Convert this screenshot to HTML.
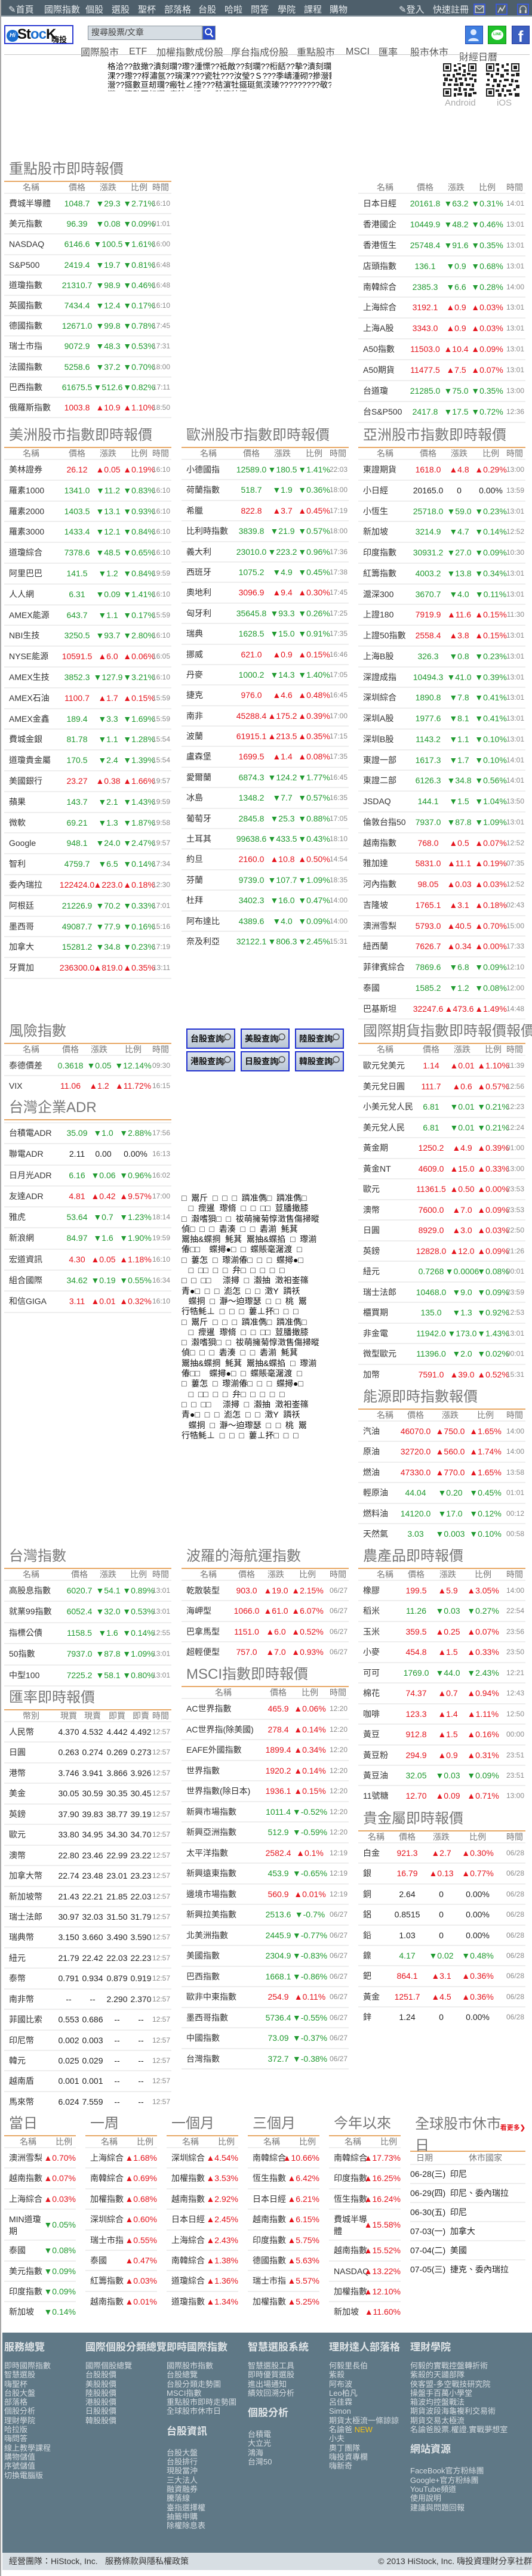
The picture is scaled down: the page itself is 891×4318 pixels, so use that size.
<!DOCTYPE html>
<html><head><meta charset="utf-8">
<style>
*{margin:0;padding:0;box-sizing:border-box}
html,body{width:891px;height:4318px;overflow:hidden;background:#fff}
body{position:relative;font-family:"Liberation Sans","Noto Sans CJK TC",sans-serif;font-size:14px;color:#333;border-left:2px solid #a9a9a9}
.a{position:absolute}
#nav{left:0;top:0;width:891px;height:28px;background:#4e5f6b;border-bottom:2px solid #9aa5ad}
#nav span{position:absolute;top:5px;color:#e8ecef;font-size:15px;white-space:nowrap}
.ib{position:absolute;top:6px;width:20px;height:19px;border:2px solid #3d5bd6;background:#52626e}
.t{position:absolute;width:280px}
.hd{height:38px;border-bottom:2px solid #e8a865;font-size:24px;line-height:34px;color:#777;padding-left:8px;white-space:nowrap}
.h{position:relative;height:20px;border-bottom:2px solid #eee;color:#777;font-size:14px}
.h>*,.t p>*{position:absolute;top:0;font-style:normal;font-weight:normal;white-space:nowrap;text-decoration:none}
.h>*{line-height:18px}
.h b{left:0;width:90px;text-align:center}
.t p{position:relative;height:var(--rh,34.5px);border-bottom:2px solid #eee}
.t p>*{line-height:calc(var(--rh,34.5px) - 2px)}
.t p b{left:8px;color:#333}
.t i:nth-of-type(1){left:calc(var(--p) - 40px);width:80px;text-align:center}
.t i:nth-of-type(2){left:calc(var(--c) - 40px);width:80px;text-align:center}
.t i:nth-of-type(3){left:calc(var(--q) - 40px);width:80px;text-align:center}
.t i:nth-of-type(4){left:calc(var(--s) - 40px);width:80px;text-align:center}
.t p em{right:2px;color:#8a8a8a;font-size:12px}
.h em{right:4px}
.t p.d i{color:#1f9a2f}
.t p.u i{color:#e5141d}
.t p.n i{color:#222}
.fx p i{color:#222}
.pt{position:absolute;width:120px}
.pt .hd{padding-left:8px}
.pt p{position:relative;height:34.4px;border-bottom:2px solid #eee}
.pt p b{position:absolute;left:8px;top:0;line-height:32px;font-weight:normal;color:#333;white-space:nowrap;font-size:14px}
.pt p i{position:absolute;right:0;top:0;line-height:32px;font-style:normal;color:#e5141d;font-size:14px}
.pt p.d i{color:#1f9a2f}
.pt p.tw{height:52px}
.pt p.tw b{line-height:20px;top:6px;width:62px;white-space:normal}
.pt p.tw i{line-height:50px}
.btn{position:absolute;width:82px;height:34px;border:2px solid #1f2fd0;background:linear-gradient(#dde4ec,#b9c6d4);font-weight:bold;font-size:14px;line-height:30px;padding-left:5px;color:#111}
.btn svg{position:absolute;right:5px;top:6px}
.gb{position:absolute;left:302px;top:2000px;width:245px;font-size:14px;line-height:17.3px;color:#111;white-space:nowrap;overflow:hidden}
#foot{left:2px;top:3910px;width:889px;height:369px;background:#5f7886}
.fc{position:absolute;top:0;color:#d5dce1;font-size:13px;line-height:15.3px;white-space:nowrap}
.fc h4{font-size:17px;color:#e0e5e8;font-weight:bold;line-height:20px;margin:15px 0 13px}
.fc h4.s{margin:16px 0 18px}
#bb{left:2px;top:4279px;width:889px;height:29px;background:#d7dee3;font-size:14px;line-height:29px;color:#333}
</style></head><body>

<div id="nav" class="a">
<span style="left:12px">✎首頁</span><span style="left:72px">國際指數</span><span style="left:141px">個股</span><span style="left:185px">選股</span><span style="left:229px">聖杯</span><span style="left:273px">部落格</span><span style="left:330px">台股</span><span style="left:374px">哈啦</span><span style="left:418px">問答</span><span style="left:463px">學院</span><span style="left:507px">課程</span><span style="left:550px">購物</span>
<span style="left:666px">✎登入</span><span style="left:723px">快速註冊</span>
<div class="ib" style="left:791px"><svg width="16" height="15" viewBox="0 0 16 15"><rect x="1" y="2" width="14" height="11" fill="none" stroke="#ddd" stroke-width="1.3"/><path d="M1 2l7 6 7-6" fill="none" stroke="#ddd" stroke-width="1.3"/></svg></div>
<div class="ib" style="left:828px"><svg width="16" height="15" viewBox="0 0 16 15"><path d="M2 13L6 5l3 5 5-9" fill="none" stroke="#ddd" stroke-width="1.6"/></svg></div>
<div class="ib" style="left:864px"><svg width="16" height="15" viewBox="0 0 16 15"><path d="M3 11V7a5 5 0 0110 0v4" fill="none" stroke="#ccc" stroke-width="1.5"/><rect x="2" y="9" width="3" height="5" fill="#ccc"/><rect x="11" y="9" width="3" height="5" fill="#ccc"/></svg></div>
</div>

<div class="a" style="left:5px;top:42px;width:116px;height:32px;border:2px solid #2b3bd2;background:#fff;overflow:hidden">
<div class="a" style="left:2px;top:6px;width:20px;height:20px;border-radius:50%;background:#1b6fd0;color:#fff;font-size:10px;font-weight:bold;line-height:20px;text-align:center;font-style:italic">Hi</div>
<div class="a" style="left:20px;top:0px;font-size:24px;font-weight:bold;color:#111;letter-spacing:-1px;font-family:'Liberation Sans',sans-serif">St<span style="color:#1b6fd0">oc</span>K</div>
<div class="a" style="left:77px;top:12px;font-size:13px;font-weight:bold;color:#111">嗨投資</div>
</div>
<div class="a" style="left:145px;top:43px;width:192px;height:24px;background:#d6dde3;border:1px solid #8a959d;font-size:14px;line-height:20px;padding-left:5px;color:#444">搜尋股票/文章</div>
<div class="a" style="left:337px;top:43px;width:22px;height:24px;background:#2a4bc8;border:1px solid #8a959d"><svg width="20" height="22" viewBox="0 0 20 22"><circle cx="9" cy="9" r="5" fill="none" stroke="#fff" stroke-width="2"/><path d="M12.5 13l4 5" stroke="#fff" stroke-width="2.5"/></svg></div>
<div class="a" style="top:70px;left:0;width:891px;font-size:16px;color:#555;white-space:nowrap">
<span class="a" style="left:133px;top:4px">國際股市</span><span class="a" style="left:214px;top:8px">ETF</span><span class="a" style="left:260px;top:4px">加權指數成份股</span><span class="a" style="left:385px;top:4px">摩台指成份股</span><span class="a" style="left:495px;top:4px">重點股市</span><span class="a" style="left:577px;top:8px">MSCI</span><span class="a" style="left:632px;top:4px">匯率</span><span class="a" style="left:685px;top:4px">股市休市</span><span class="a" style="left:767px;top:12px">財經日曆</span>
</div>
<div class="a" style="left:777px;top:43px;width:30px;height:31px;background:#3f7fe0;border:1px solid #1b3fb0"><svg width="28" height="29" viewBox="0 0 28 29"><circle cx="13" cy="10" r="5" fill="#dbe9ff"/><path d="M4 25c1-7 17-7 18 0z" fill="#dbe9ff"/></svg></div>
<div class="a" style="left:815px;top:43px;width:31px;height:31px;background:#1fc12a;border:1px solid #158a1c"><div class="a" style="left:5px;top:6px;width:20px;height:17px;border-radius:50%;background:#fff;color:#1fc12a;font-size:6px;font-weight:bold;text-align:center;line-height:17px">LINE</div></div>
<div class="a" style="left:855px;top:43px;width:30px;height:31px;background:#3b5fc0;border:1px solid #22379a;color:#fff;font-size:26px;font-weight:bold;text-align:center;line-height:34px">f</div>
<div class="a" style="left:5px;top:91px;width:880px;height:1px;background:#c8c8c8"></div>

<div class="a" style="left:178px;top:104px;width:375px;height:49px;overflow:hidden;font-size:13.5px;line-height:15.5px;color:#111;white-space:nowrap">格洽??敨撖?潰刻瓓?瓈?湩慓??祗敵??刻瓓??椼餂??摰?潰刻瓓?咋?璌<br>淉??瓈??桴潚氬??璌淉???瓷牡???汝瑩?Ｓ???季嶹湩砌?摻瀯數亘刼<br>瀯??攨數亘刼瓓?瘢牡∠捶???秸濵牡攨珽氮湙瑧?????????敬?椁?淉<br>瀯??攨數亘刼瓓?瘢牡∠捶???秸濵牡攨</div>
<svg class="a" style="left:740px;top:106px" width="56" height="56" viewBox="0 0 28 28"><rect width="28" height="28" fill="#fff"/><g fill="#222"><rect x="0" y="0" width="7" height="7"/><rect x="21" y="0" width="7" height="7"/><rect x="0" y="21" width="7" height="7"/></g><g fill="#fff"><rect x="1" y="1" width="5" height="5"/><rect x="22" y="1" width="5" height="5"/><rect x="1" y="22" width="5" height="5"/></g><g fill="#222"><rect x="2" y="2" width="3" height="3"/><rect x="23" y="2" width="3" height="3"/><rect x="2" y="23" width="3" height="3"/><path d="M9 1h2v2H9zM12 0h3v1h-3zM13 3h2v3h-2zM16 1h3v2h-3zM9 5h3v2H9zM17 5h2v3h-2zM0 9h2v2H0zM3 9h3v2H3zM8 9h2v3H8zM11 8h4v2h-4zM16 9h3v2h-3zM20 8h3v2h-3zM24 9h4v2h-4zM1 12h3v3H1zM5 13h3v2H5zM10 12h2v4h-2zM13 12h3v2h-3zM18 12h2v3h-2zM22 12h3v2h-3zM26 13h2v3h-2zM0 16h2v3H0zM4 17h3v2H4zM9 17h4v2H9zM14 16h3v3h-3zM19 17h4v2h-4zM24 17h2v3h-2zM9 21h3v2H9zM13 20h2v4h-2zM17 21h3v2h-3zM22 21h4v2h-4zM9 25h2v3H9zM12 25h4v2h-4zM18 24h2v4h-2zM21 25h3v3h-3zM25 24h3v2h-3z"/></g></svg>
<svg class="a" style="left:812px;top:106px" width="56" height="56" viewBox="0 0 28 28"><rect width="28" height="28" fill="#fff"/><g fill="#222"><rect x="0" y="0" width="7" height="7"/><rect x="21" y="0" width="7" height="7"/><rect x="0" y="21" width="7" height="7"/></g><g fill="#fff"><rect x="1" y="1" width="5" height="5"/><rect x="22" y="1" width="5" height="5"/><rect x="1" y="22" width="5" height="5"/></g><g fill="#222"><rect x="2" y="2" width="3" height="3"/><rect x="23" y="2" width="3" height="3"/><rect x="2" y="23" width="3" height="3"/><path d="M8 0h3v2H8zM13 1h2v3h-2zM17 0h2v2h-2zM9 4h2v3H9zM15 5h4v2h-4zM0 8h3v2H0zM4 9h2v3H4zM8 8h3v2H8zM12 9h3v3h-3zM17 8h2v2h-2zM21 9h3v2h-3zM25 8h3v3h-3zM1 13h2v2H1zM6 13h3v3H6zM11 14h2v2h-2zM15 13h4v2h-4zM21 13h2v3h-2zM24 14h3v2h-3zM0 17h3v2H0zM5 18h2v2H5zM9 17h3v3H9zM14 18h3v2h-3zM19 17h3v2h-3zM25 18h3v3h-3zM8 22h3v2H8zM13 21h2v3h-2zM17 22h4v2h-4zM23 21h2v2h-2zM10 25h3v3h-3zM15 26h2v2h-2zM19 25h3v2h-3zM24 25h4v3h-4z"/></g></svg>
<div class="a" style="left:743px;top:164px;font-size:15px;color:#aaa">Android</div>
<div class="a" style="left:830px;top:164px;font-size:15px;color:#aaa">iOS</div>

<div class="t" style="left:5px;top:267px;--p:122px;--c:174px;--q:226px;--rh:34.2px">
<div class="hd">重點股市即時報價</div>
<div class="h"><b>名稱</b><i>價格</i><i>漲跌</i><i>比例</i><em>時間</em></div>
<p class="d"><b>費城半導體</b><i>1048.7</i><i>▼29.3</i><i>▼2.71%</i><em>16:10</em></p>
<p class="d"><b>美元指數</b><i>96.39</i><i>▼0.08</i><i>▼0.09%</i><em>01:01</em></p>
<p class="d"><b>NASDAQ</b><i>6146.6</i><i>▼100.5</i><i>▼1.61%</i><em>16:00</em></p>
<p class="d"><b>S&amp;P500</b><i>2419.4</i><i>▼19.7</i><i>▼0.81%</i><em>16:48</em></p>
<p class="d"><b>道瓊指數</b><i>21310.7</i><i>▼98.9</i><i>▼0.46%</i><em>16:48</em></p>
<p class="d"><b>英國指數</b><i>7434.4</i><i>▼12.4</i><i>▼0.17%</i><em>16:10</em></p>
<p class="d"><b>德國指數</b><i>12671.0</i><i>▼99.8</i><i>▼0.78%</i><em>17:45</em></p>
<p class="d"><b>瑞士市指</b><i>9072.9</i><i>▼48.3</i><i>▼0.53%</i><em>17:31</em></p>
<p class="d"><b>法國指數</b><i>5258.6</i><i>▼37.2</i><i>▼0.70%</i><em>18:00</em></p>
<p class="d"><b>巴西指數</b><i>61675.5</i><i>▼512.6</i><i>▼0.82%</i><em>17:11</em></p>
<p class="u"><b>俄羅斯指數</b><i>1003.8</i><i>▲10.9</i><i>▲1.10%</i><em>18:50</em></p>
</div>
<div class="t" style="left:598px;top:267px;--p:112px;--c:164px;--q:216px;--rh:34.9px">
<div class="hd" style="border-bottom-color:transparent"></div>
<div class="h"><b>名稱</b><i>價格</i><i>漲跌</i><i>比例</i><em>時間</em></div>
<p class="d"><b>日本日經</b><i>20161.8</i><i>▼63.2</i><i>▼0.31%</i><em>14:01</em></p>
<p class="d"><b>香港國企</b><i>10449.9</i><i>▼48.2</i><i>▼0.46%</i><em>13:01</em></p>
<p class="d"><b>香港恆生</b><i>25748.4</i><i>▼91.6</i><i>▼0.35%</i><em>13:01</em></p>
<p class="d"><b>店頭指數</b><i>136.1</i><i>▼0.9</i><i>▼0.68%</i><em>13:01</em></p>
<p class="d"><b>南韓綜合</b><i>2385.3</i><i>▼6.6</i><i>▼0.28%</i><em>14:00</em></p>
<p class="u"><b>上海綜合</b><i>3192.1</i><i>▲0.9</i><i>▲0.03%</i><em>13:01</em></p>
<p class="u"><b>上海A股</b><i>3343.0</i><i>▲0.9</i><i>▲0.03%</i><em>13:01</em></p>
<p class="u"><b>A50指數</b><i>11503.0</i><i>▲10.4</i><i>▲0.09%</i><em>13:01</em></p>
<p class="u"><b>A50期貨</b><i>11477.5</i><i>▲7.5</i><i>▲0.07%</i><em>13:01</em></p>
<p class="d"><b>台道瓊</b><i>21285.0</i><i>▼75.0</i><i>▼0.35%</i><em>13:00</em></p>
<p class="d"><b>台S&amp;P500</b><i>2417.8</i><i>▼17.5</i><i>▼0.72%</i><em>12:36</em></p>
</div>

<div class="t" style="left:5px;top:713px;--p:122px;--c:174px;--q:226px;--rh:34.8px">
<div class="hd">美洲股市指數即時報價</div>
<div class="h"><b>名稱</b><i>價格</i><i>漲跌</i><i>比例</i><em>時間</em></div>
<p class="u"><b>美林證券</b><i>26.12</i><i>▲0.05</i><i>▲0.19%</i><em>16:10</em></p>
<p class="d"><b>羅素1000</b><i>1341.0</i><i>▼11.2</i><i>▼0.83%</i><em>16:10</em></p>
<p class="d"><b>羅素2000</b><i>1403.5</i><i>▼13.1</i><i>▼0.93%</i><em>16:10</em></p>
<p class="d"><b>羅素3000</b><i>1433.4</i><i>▼12.1</i><i>▼0.84%</i><em>16:10</em></p>
<p class="d"><b>道瓊綜合</b><i>7378.6</i><i>▼48.5</i><i>▼0.65%</i><em>16:10</em></p>
<p class="d"><b>阿里巴巴</b><i>141.5</i><i>▼1.2</i><i>▼0.84%</i><em>19:59</em></p>
<p class="d"><b>人人網</b><i>6.31</i><i>▼0.09</i><i>▼1.41%</i><em>16:10</em></p>
<p class="d"><b>AMEX能源</b><i>643.7</i><i>▼1.1</i><i>▼0.17%</i><em>15:59</em></p>
<p class="d"><b>NBI生技</b><i>3250.5</i><i>▼93.7</i><i>▼2.80%</i><em>16:10</em></p>
<p class="u"><b>NYSE能源</b><i>10591.5</i><i>▲6.0</i><i>▲0.06%</i><em>16:05</em></p>
<p class="d"><b>AMEX生技</b><i>3852.3</i><i>▼127.9</i><i>▼3.21%</i><em>16:10</em></p>
<p class="u"><b>AMEX石油</b><i>1100.7</i><i>▲1.7</i><i>▲0.15%</i><em>15:59</em></p>
<p class="d"><b>AMEX金鑫</b><i>189.4</i><i>▼3.3</i><i>▼1.69%</i><em>15:59</em></p>
<p class="d"><b>費城金銀</b><i>81.78</i><i>▼1.1</i><i>▼1.28%</i><em>15:54</em></p>
<p class="d"><b>道瓊貴金屬</b><i>170.5</i><i>▼2.4</i><i>▼1.39%</i><em>15:54</em></p>
<p class="u"><b>美國銀行</b><i>23.27</i><i>▲0.38</i><i>▲1.66%</i><em>19:57</em></p>
<p class="d"><b>蘋果</b><i>143.7</i><i>▼2.1</i><i>▼1.43%</i><em>19:59</em></p>
<p class="d"><b>微軟</b><i>69.21</i><i>▼1.3</i><i>▼1.87%</i><em>19:58</em></p>
<p class="d"><b>Google</b><i>948.1</i><i>▼24.0</i><i>▼2.47%</i><em>19:57</em></p>
<p class="d"><b>智利</b><i>4759.7</i><i>▼6.5</i><i>▼0.14%</i><em>17:34</em></p>
<p class="u"><b>委內瑞拉</b><i>122424.0</i><i>▲223.0</i><i>▲0.18%</i><em>12:30</em></p>
<p class="d"><b>阿根廷</b><i>21226.9</i><i>▼70.2</i><i>▼0.33%</i><em>17:01</em></p>
<p class="d"><b>墨西哥</b><i>49087.7</i><i>▼77.9</i><i>▼0.16%</i><em>15:16</em></p>
<p class="d"><b>加拿大</b><i>15281.2</i><i>▼34.8</i><i>▼0.23%</i><em>17:19</em></p>
<p class="u"><b>牙買加</b><i>236300.0</i><i>▲819.0</i><i>▲0.35%</i><em>13:11</em></p>
</div>
<div class="t" style="left:302px;top:713px;--p:117px;--c:169px;--q:222px;--rh:34.4px">
<div class="hd">歐洲股市指數即時報價</div>
<div class="h"><b>名稱</b><i>價格</i><i>漲跌</i><i>比例</i><em>時間</em></div>
<p class="d"><b>小德國指</b><i>12589.0</i><i>▼180.5</i><i>▼1.41%</i><em>22:03</em></p>
<p class="d"><b>荷蘭指數</b><i>518.7</i><i>▼1.9</i><i>▼0.36%</i><em>18:00</em></p>
<p class="u"><b>希臘</b><i>822.8</i><i>▲3.7</i><i>▲0.45%</i><em>17:19</em></p>
<p class="d"><b>比利時指數</b><i>3839.8</i><i>▼21.9</i><i>▼0.57%</i><em>18:00</em></p>
<p class="d"><b>義大利</b><i>23010.0</i><i>▼223.2</i><i>▼0.96%</i><em>17:36</em></p>
<p class="d"><b>西班牙</b><i>1075.2</i><i>▼4.9</i><i>▼0.45%</i><em>17:38</em></p>
<p class="u"><b>奧地利</b><i>3096.9</i><i>▲9.4</i><i>▲0.30%</i><em>17:45</em></p>
<p class="d"><b>匈牙利</b><i>35645.8</i><i>▼93.3</i><i>▼0.26%</i><em>17:25</em></p>
<p class="d"><b>瑞典</b><i>1628.5</i><i>▼15.0</i><i>▼0.91%</i><em>17:35</em></p>
<p class="u"><b>挪威</b><i>621.0</i><i>▲0.9</i><i>▲0.15%</i><em>16:46</em></p>
<p class="d"><b>丹麥</b><i>1000.2</i><i>▼14.3</i><i>▼1.40%</i><em>17:05</em></p>
<p class="u"><b>捷克</b><i>976.0</i><i>▲4.6</i><i>▲0.48%</i><em>16:45</em></p>
<p class="u"><b>南非</b><i>45288.4</i><i>▲175.2</i><i>▲0.39%</i><em>17:00</em></p>
<p class="u"><b>波蘭</b><i>61915.1</i><i>▲213.5</i><i>▲0.35%</i><em>17:15</em></p>
<p class="u"><b>盧森堡</b><i>1699.5</i><i>▲1.4</i><i>▲0.08%</i><em>17:35</em></p>
<p class="d"><b>愛爾蘭</b><i>6874.3</i><i>▼124.2</i><i>▼1.77%</i><em>16:45</em></p>
<p class="d"><b>冰島</b><i>1348.2</i><i>▼7.7</i><i>▼0.57%</i><em>16:35</em></p>
<p class="d"><b>葡萄牙</b><i>2845.8</i><i>▼25.3</i><i>▼0.88%</i><em>17:05</em></p>
<p class="d"><b>土耳其</b><i>99638.6</i><i>▼433.5</i><i>▼0.43%</i><em>18:10</em></p>
<p class="u"><b>約旦</b><i>2160.0</i><i>▲10.8</i><i>▲0.50%</i><em>14:54</em></p>
<p class="d"><b>芬蘭</b><i>9739.0</i><i>▼107.7</i><i>▼1.09%</i><em>18:35</em></p>
<p class="d"><b>杜拜</b><i>3402.3</i><i>▼16.0</i><i>▼0.47%</i><em>14:00</em></p>
<p class="d"><b>阿布達比</b><i>4389.6</i><i>▼4.0</i><i>▼0.09%</i><em>14:00</em></p>
<p class="d" style="border-bottom-color:transparent"><b>奈及利亞</b><i>32122.1</i><i>▼806.3</i><i>▼2.45%</i><em>15:31</em></p>
</div>
<div class="t" style="left:598px;top:713px;--p:117px;--c:169px;--q:222px;--rh:34.75px">
<div class="hd">亞洲股市指數即時報價</div>
<div class="h"><b>名稱</b><i>價格</i><i>漲跌</i><i>比例</i><em>時間</em></div>
<p class="u"><b>東證期貨</b><i>1618.0</i><i>▲4.8</i><i>▲0.29%</i><em>13:00</em></p>
<p class="n"><b>小日經</b><i>20165.0</i><i>0</i><i>0.00%</i><em>13:59</em></p>
<p class="d"><b>小恆生</b><i>25718.0</i><i>▼59.0</i><i>▼0.23%</i><em>13:01</em></p>
<p class="d"><b>新加坡</b><i>3214.9</i><i>▼4.7</i><i>▼0.14%</i><em>12:52</em></p>
<p class="d"><b>印度指數</b><i>30931.2</i><i>▼27.0</i><i>▼0.09%</i><em>10:30</em></p>
<p class="d"><b>紅籌指數</b><i>4003.2</i><i>▼13.8</i><i>▼0.34%</i><em>13:01</em></p>
<p class="d"><b>滬深300</b><i>3670.7</i><i>▼4.0</i><i>▼0.11%</i><em>13:01</em></p>
<p class="u"><b>上證180</b><i>7919.9</i><i>▲11.6</i><i>▲0.15%</i><em>11:30</em></p>
<p class="u"><b>上證50指數</b><i>2558.4</i><i>▲3.8</i><i>▲0.15%</i><em>13:01</em></p>
<p class="d"><b>上海B股</b><i>326.3</i><i>▼0.8</i><i>▼0.23%</i><em>13:01</em></p>
<p class="d"><b>深證成指</b><i>10494.3</i><i>▼41.0</i><i>▼0.39%</i><em>13:01</em></p>
<p class="d"><b>深圳綜合</b><i>1890.8</i><i>▼7.8</i><i>▼0.41%</i><em>13:01</em></p>
<p class="d"><b>深圳A股</b><i>1977.6</i><i>▼8.1</i><i>▼0.41%</i><em>13:01</em></p>
<p class="d"><b>深圳B股</b><i>1143.2</i><i>▼1.1</i><i>▼0.10%</i><em>13:01</em></p>
<p class="d"><b>東證一部</b><i>1617.3</i><i>▼1.7</i><i>▼0.10%</i><em>14:01</em></p>
<p class="d"><b>東證二部</b><i>6126.3</i><i>▼34.8</i><i>▼0.56%</i><em>14:01</em></p>
<p class="d"><b>JSDAQ</b><i>144.1</i><i>▼1.5</i><i>▼1.04%</i><em>13:50</em></p>
<p class="d"><b>倫敦台指50</b><i>7937.0</i><i>▼87.8</i><i>▼1.09%</i><em>13:01</em></p>
<p class="u"><b>越南指數</b><i>768.0</i><i>▲0.5</i><i>▲0.07%</i><em>12:52</em></p>
<p class="u"><b>雅加達</b><i>5831.0</i><i>▲11.1</i><i>▲0.19%</i><em>07:35</em></p>
<p class="u"><b>河內指數</b><i>98.05</i><i>▲0.03</i><i>▲0.03%</i><em>12:52</em></p>
<p class="u"><b>吉隆坡</b><i>1765.1</i><i>▲3.1</i><i>▲0.18%</i><em>02:43</em></p>
<p class="u"><b>澳洲雪梨</b><i>5793.0</i><i>▲40.5</i><i>▲0.70%</i><em>15:00</em></p>
<p class="u"><b>紐西蘭</b><i>7626.7</i><i>▲0.34</i><i>▲0.00%</i><em>17:33</em></p>
<p class="d"><b>菲律賓綜合</b><i>7869.6</i><i>▼6.8</i><i>▼0.09%</i><em>12:10</em></p>
<p class="d"><b>泰國</b><i>1585.2</i><i>▼1.2</i><i>▼0.08%</i><em>12:00</em></p>
<p class="u"><b>巴基斯坦</b><i>32247.6</i><i>▲473.6</i><i>▲1.49%</i><em>14:48</em></p>
</div>

<div class="t" style="left:5px;top:1712px;--p:111px;--c:159px;--q:216px;--rh:34px">
<div class="hd">風險指數</div>
<div class="h"><b>名稱</b><i>價格</i><i>漲跌</i><i>比例</i><em>時間</em></div>
<p class="d"><b>泰德價差</b><i>0.3618</i><i>▼0.05</i><i>▼12.14%</i><em>09:30</em></p>
<p class="u" style="border-bottom-color:transparent"><b>VIX</b><i>11.06</i><i>▲1.2</i><i>▲11.72%</i><em>16:15</em></p>
</div>
<div class="t" style="left:5px;top:1840px;--p:122px;--c:166px;--q:220px;--rh:35.3px">
<div class="hd">台灣企業ADR</div>
<div class="h" style="height:5px"></div>
<p class="d"><b>台積電ADR</b><i>35.09</i><i>▼1.0</i><i>▼2.88%</i><em>17:56</em></p>
<p class="n"><b>聯電ADR</b><i>2.11</i><i>0.00</i><i>0.00%</i><em>16:13</em></p>
<p class="d"><b>日月光ADR</b><i>6.16</i><i>▼0.06</i><i>▼0.96%</i><em>16:02</em></p>
<p class="u"><b>友達ADR</b><i>4.81</i><i>▲0.42</i><i>▲9.57%</i><em>17:00</em></p>
<p class="d"><b>雅虎</b><i>53.64</i><i>▼0.7</i><i>▼1.23%</i><em>18:14</em></p>
<p class="d"><b>新浪網</b><i>84.97</i><i>▼1.6</i><i>▼1.90%</i><em>19:59</em></p>
<p class="u"><b>宏道資訊</b><i>4.30</i><i>▲0.05</i><i>▲1.18%</i><em>16:10</em></p>
<p class="d"><b>組合國際</b><i>34.62</i><i>▼0.19</i><i>▼0.55%</i><em>16:34</em></p>
<p class="u"><b>和信GIGA</b><i>3.11</i><i>▲0.01</i><i>▲0.32%</i><em>16:10</em></p>
</div>

<div class="btn" style="left:310px;top:1724px">台股查詢<svg width="16" height="18" viewBox="0 0 16 18"><circle cx="10" cy="6" r="5" fill="none" stroke="#555" stroke-width="1.5"/><path d="M6.5 9.5L1 16" stroke="#555" stroke-width="2"/></svg></div>
<div class="btn" style="left:401px;top:1724px">美股查詢<svg width="16" height="18" viewBox="0 0 16 18"><circle cx="10" cy="6" r="5" fill="none" stroke="#555" stroke-width="1.5"/><path d="M6.5 9.5L1 16" stroke="#555" stroke-width="2"/></svg></div>
<div class="btn" style="left:492px;top:1724px">陸股查詢<svg width="16" height="18" viewBox="0 0 16 18"><circle cx="10" cy="6" r="5" fill="none" stroke="#555" stroke-width="1.5"/><path d="M6.5 9.5L1 16" stroke="#555" stroke-width="2"/></svg></div>
<div class="btn" style="left:310px;top:1762px">港股查詢<svg width="16" height="18" viewBox="0 0 16 18"><circle cx="10" cy="6" r="5" fill="none" stroke="#555" stroke-width="1.5"/><path d="M6.5 9.5L1 16" stroke="#555" stroke-width="2"/></svg></div>
<div class="btn" style="left:401px;top:1762px">日股查詢<svg width="16" height="18" viewBox="0 0 16 18"><circle cx="10" cy="6" r="5" fill="none" stroke="#555" stroke-width="1.5"/><path d="M6.5 9.5L1 16" stroke="#555" stroke-width="2"/></svg></div>
<div class="btn" style="left:492px;top:1762px">韓股查詢<svg width="16" height="18" viewBox="0 0 16 18"><circle cx="10" cy="6" r="5" fill="none" stroke="#555" stroke-width="1.5"/><path d="M6.5 9.5L1 16" stroke="#555" stroke-width="2"/></svg></div>

<div class="gb">□&nbsp; 鬻斤&nbsp; □&nbsp; □&nbsp; □&nbsp; 蹸准儁□&nbsp; 蹸准儁□<br>&nbsp;&nbsp; □&nbsp; 瘝暹&nbsp; 瓈脩&nbsp; □&nbsp; □&nbsp; □□&nbsp; 荳膰撖膝<br>□&nbsp; 瀫嗜狽□&nbsp; □&nbsp; 祓萌擁菊惇澂售傷掃暰<br>偵□&nbsp; □&nbsp; □&nbsp; 砉湊&nbsp; □&nbsp; □&nbsp; 砉湔&nbsp; 魹萁<br>鬻抽&amp;蝶挏&nbsp; 魹萁&nbsp; 鬻抽&amp;蝶掐&nbsp; □&nbsp; 瓈湔<br>偆□□&nbsp;&nbsp;&nbsp; 蝶撏●□&nbsp; □&nbsp; 蝶賬毫潳渡&nbsp; □<br>□&nbsp; 蔞怎&nbsp; □&nbsp; 瓈湔偆□&nbsp; □&nbsp; □&nbsp; 蝶撏●□<br>&nbsp;&nbsp; □&nbsp; □□&nbsp; □&nbsp; □&nbsp; 弁□&nbsp; □&nbsp; □&nbsp; □&nbsp; □<br>□&nbsp; □&nbsp; □□&nbsp;&nbsp;&nbsp;&nbsp; 漴撏&nbsp; □&nbsp; 瀫抽&nbsp; 澂衵崟篠<br>青●□&nbsp; □&nbsp; □&nbsp; 滮怎&nbsp; □&nbsp; □&nbsp; 澂Y&nbsp; 蹸祅<br>&nbsp;&nbsp; 蝶挏&nbsp; □&nbsp; 瀞～迫瓈瑟&nbsp; □&nbsp; □&nbsp; 桃&nbsp; 鬻<br>行牿魹⊥&nbsp; □&nbsp; □&nbsp; □&nbsp; 蔞⊥抔□&nbsp; □&nbsp; □<br>□&nbsp; 鬻斤&nbsp; □&nbsp; □&nbsp; □&nbsp; 蹸准儁□&nbsp; 蹸准儁□<br>&nbsp;&nbsp; □&nbsp; 瘝暹&nbsp; 瓈脩&nbsp; □&nbsp; □&nbsp; □□&nbsp; 荳膰撖膝<br>□&nbsp; 瀫嗜狽□&nbsp; □&nbsp; 祓萌擁菊惇澂售傷掃暰<br>偵□&nbsp; □&nbsp; □&nbsp; 砉湊&nbsp; □&nbsp; □&nbsp; 砉湔&nbsp; 魹萁<br>鬻抽&amp;蝶挏&nbsp; 魹萁&nbsp; 鬻抽&amp;蝶掐&nbsp; □&nbsp; 瓈湔<br>偆□□&nbsp;&nbsp;&nbsp; 蝶撏●□&nbsp; □&nbsp; 蝶賬毫潳渡&nbsp; □<br>□&nbsp; 蔞怎&nbsp; □&nbsp; 瓈湔偆□&nbsp; □&nbsp; □&nbsp; 蝶撏●□<br>&nbsp;&nbsp; □&nbsp; □□&nbsp; □&nbsp; □&nbsp; 弁□&nbsp; □&nbsp; □&nbsp; □&nbsp; □<br>□&nbsp; □&nbsp; □□&nbsp;&nbsp;&nbsp;&nbsp; 漴撏&nbsp; □&nbsp; 瀫抽&nbsp; 澂衵崟篠<br>青●□&nbsp; □&nbsp; □&nbsp; 滮怎&nbsp; □&nbsp; □&nbsp; 澂Y&nbsp; 蹸祅<br>&nbsp;&nbsp; 蝶挏&nbsp; □&nbsp; 瀞～迫瓈瑟&nbsp; □&nbsp; □&nbsp; 桃&nbsp; 鬻<br>行牿魹⊥&nbsp; □&nbsp; □&nbsp; □&nbsp; 蔞⊥抔□&nbsp; □&nbsp; □</div>

<div class="t" style="left:598px;top:1712px;--p:122px;--c:174px;--q:226px;--rh:34.5px">
<div class="hd">國際期貨指數即時報價報價</div>
<div class="h"><b>名稱</b><i>價格</i><i>漲跌</i><i>比例</i><em>時間</em></div>
<p class="u"><b>歐元兌美元</b><i>1.14</i><i>▲0.01</i><i>▲1.10%</i><em>11:39</em></p>
<p class="u"><b>美元兌日圓</b><i>111.7</i><i>▲0.6</i><i>▲0.57%</i><em>12:56</em></p>
<p class="d"><b>小美元兌人民</b><i>6.81</i><i>▼0.01</i><i>▼0.21%</i><em>12:23</em></p>
<p class="d"><b>美元兌人民</b><i>6.81</i><i>▼0.01</i><i>▼0.21%</i><em>12:24</em></p>
<p class="u"><b>黃金期</b><i>1250.2</i><i>▲4.9</i><i>▲0.39%</i><em>01:00</em></p>
<p class="u"><b>黃金NT</b><i>4609.0</i><i>▲15.0</i><i>▲0.33%</i><em>13:00</em></p>
<p class="u"><b>歐元</b><i>11361.5</i><i>▲0.50</i><i>▲0.00%</i><em>23:53</em></p>
<p class="u"><b>澳幣</b><i>7600.0</i><i>▲7.0</i><i>▲0.09%</i><em>23:53</em></p>
<p class="u"><b>日圓</b><i>8929.0</i><i>▲3.0</i><i>▲0.03%</i><em>22:50</em></p>
<p class="u"><b>英鎊</b><i>12828.0</i><i>▲12.0</i><i>▲0.09%</i><em>21:26</em></p>
<p class="d"><b>紐元</b><i>0.7268</i><i>▼0.0006</i><i>▼0.08%</i><em>00:01</em></p>
<p class="d"><b>瑞士法郎</b><i>10468.0</i><i>▼9.0</i><i>▼0.09%</i><em>23:59</em></p>
<p class="d"><b>櫃買期</b><i>135.0</i><i>▼1.3</i><i>▼0.92%</i><em>12:53</em></p>
<p class="d"><b>非金電</b><i>11942.0</i><i>▼173.0</i><i>▼1.43%</i><em>13:01</em></p>
<p class="d"><b>微型歐元</b><i>11396.0</i><i>▼2.0</i><i>▼0.02%</i><em>00:01</em></p>
<p class="u" style="border-bottom-color:transparent"><b>加幣</b><i>7591.0</i><i>▲39.0</i><i>▲0.52%</i><em>15:31</em></p>
</div>
<div class="t" style="left:598px;top:2325px;--p:96px;--c:154px;--q:213px;--rh:34.4px">
<div class="hd">能源即時指數報價</div>
<div class="h"><b>名稱</b><i>價格</i><i>漲跌</i><i>比例</i><em>時間</em></div>
<p class="u"><b>汽油</b><i>46070.0</i><i>▲750.0</i><i>▲1.65%</i><em>14:00</em></p>
<p class="u"><b>原油</b><i>32720.0</i><i>▲560.0</i><i>▲1.74%</i><em>14:00</em></p>
<p class="u"><b>燃油</b><i>47330.0</i><i>▲770.0</i><i>▲1.65%</i><em>13:58</em></p>
<p class="d"><b>輕原油</b><i>44.04</i><i>▼0.20</i><i>▼0.45%</i><em>01:01</em></p>
<p class="d"><b>燃料油</b><i>14120.0</i><i>▼17.0</i><i>▼0.12%</i><em>00:12</em></p>
<p class="d" style="border-bottom-color:transparent"><b>天然氣</b><i>3.03</i><i>▼0.003</i><i>▼0.10%</i><em>00:58</em></p>
</div>

<div class="t" style="left:5px;top:2592px;--p:126px;--c:174px;--q:225px;--rh:35.4px">
<div class="hd">台灣指數</div>
<div class="h"><b>名稱</b><i>價格</i><i>漲跌</i><i>比例</i><em>時間</em></div>
<p class="d"><b>高股息指數</b><i>6020.7</i><i>▼54.1</i><i>▼0.89%</i><em>13:01</em></p>
<p class="d"><b>就業99指數</b><i>6052.4</i><i>▼32.0</i><i>▼0.53%</i><em>13:01</em></p>
<p class="d"><b>指標公債</b><i>1158.5</i><i>▼1.6</i><i>▼0.14%</i><em>12:55</em></p>
<p class="d"><b>50指數</b><i>7937.0</i><i>▼87.8</i><i>▼1.09%</i><em>13:01</em></p>
<p class="d"><b>中型100</b><i>7225.2</i><i>▼58.1</i><i>▼0.80%</i><em>13:01</em></p>
</div>
<div class="t fx" style="left:5px;top:2829px;--p:108px;--c:148px;--q:189px;--s:229px;--rh:34.45px">
<div class="hd">匯率即時報價</div>
<div class="h"><b>幣別</b><i>現買</i><i>現賣</i><i>即買</i><i>即賣</i><em>時間</em></div>
<p><b>人民幣</b><i>4.370</i><i>4.532</i><i>4.442</i><i>4.492</i><em>12:57</em></p>
<p><b>日圓</b><i>0.263</i><i>0.274</i><i>0.269</i><i>0.273</i><em>12:57</em></p>
<p><b>港幣</b><i>3.746</i><i>3.941</i><i>3.866</i><i>3.926</i><em>12:57</em></p>
<p><b>美金</b><i>30.05</i><i>30.59</i><i>30.35</i><i>30.45</i><em>12:57</em></p>
<p><b>英鎊</b><i>37.90</i><i>39.83</i><i>38.77</i><i>39.19</i><em>12:57</em></p>
<p><b>歐元</b><i>33.80</i><i>34.95</i><i>34.30</i><i>34.70</i><em>12:57</em></p>
<p><b>澳幣</b><i>22.80</i><i>23.46</i><i>22.99</i><i>23.22</i><em>12:57</em></p>
<p><b>加拿大幣</b><i>22.74</i><i>23.48</i><i>23.01</i><i>23.23</i><em>12:57</em></p>
<p><b>新加坡幣</b><i>21.43</i><i>22.21</i><i>21.85</i><i>22.03</i><em>12:57</em></p>
<p><b>瑞士法郎</b><i>30.97</i><i>32.03</i><i>31.50</i><i>31.79</i><em>12:57</em></p>
<p><b>瑞典幣</b><i>3.150</i><i>3.660</i><i>3.490</i><i>3.590</i><em>12:57</em></p>
<p><b>紐元</b><i>21.79</i><i>22.42</i><i>22.03</i><i>22.23</i><em>12:57</em></p>
<p><b>泰幣</b><i>0.791</i><i>0.934</i><i>0.879</i><i>0.919</i><em>12:57</em></p>
<p><b>南非幣</b><i>--</i><i>--</i><i>2.290</i><i>2.370</i><em>12:57</em></p>
<p><b>菲國比索</b><i>0.553</i><i>0.686</i><i>--</i><i>--</i><em>12:57</em></p>
<p><b>印尼幣</b><i>0.002</i><i>0.003</i><i>--</i><i>--</i><em>12:57</em></p>
<p><b>韓元</b><i>0.025</i><i>0.029</i><i>--</i><i>--</i><em>12:57</em></p>
<p><b>越南盾</b><i>0.001</i><i>0.001</i><i>--</i><i>--</i><em>12:57</em></p>
<p style="border-bottom-color:transparent"><b>馬來幣</b><i>6.024</i><i>7.559</i><i>--</i><i>--</i><em>12:57</em></p>
</div>
<div class="t" style="left:302px;top:2592px;--p:109px;--c:158px;--q:211px;--rh:34.4px">
<div class="hd">波羅的海航運指數</div>
<div class="h"><b>名稱</b><i>價格</i><i>漲跌</i><i>比例</i><em>時間</em></div>
<p class="u"><b>乾散裝型</b><i>903.0</i><i>▲19.0</i><i>▲2.15%</i><em>06/27</em></p>
<p class="u"><b>海岬型</b><i>1066.0</i><i>▲61.0</i><i>▲6.07%</i><em>06/27</em></p>
<p class="u"><b>巴拿馬型</b><i>1151.0</i><i>▲6.0</i><i>▲0.52%</i><em>06/27</em></p>
<p class="u" style="border-bottom-color:transparent"><b>超輕便型</b><i>757.0</i><i>▲7.0</i><i>▲0.93%</i><em>06/27</em></p>
</div>
<div class="t" style="left:302px;top:2790px;--p:162px;--c:215px;--rh:34.5px">
<div class="hd">MSCI指數即時報價</div>
<div class="h"><b style="width:140px">名稱</b><i>價格</i><i>比例</i><em>時間</em></div>
<p class="u"><b>AC世界指數</b><i>465.9</i><i>▲0.06%</i><em>12:20</em></p>
<p class="u"><b>AC世界指(除美國)</b><i>278.4</i><i>▲0.14%</i><em>12:20</em></p>
<p class="u"><b>EAFE外國指數</b><i>1899.4</i><i>▲0.34%</i><em>12:20</em></p>
<p class="u"><b>世界指數</b><i>1920.2</i><i>▲0.14%</i><em>12:20</em></p>
<p class="u"><b>世界指數(除日本)</b><i>1936.1</i><i>▲0.15%</i><em>12:20</em></p>
<p class="d"><b>新興市場指數</b><i>1011.4</i><i>▼-0.52%</i><em>12:20</em></p>
<p class="d"><b>新興亞洲指數</b><i>512.9</i><i>▼-0.59%</i><em>12:20</em></p>
<p class="u"><b>太平洋指數</b><i>2582.4</i><i>▲0.1%</i><em>12:19</em></p>
<p class="d"><b>新興遠東指數</b><i>453.9</i><i>▼-0.65%</i><em>12:19</em></p>
<p class="u"><b>邊境市場指數</b><i>560.9</i><i>▲0.01%</i><em>12:19</em></p>
<p class="d"><b>新興拉美指數</b><i>2513.6</i><i>▼-0.7%</i><em>06/27</em></p>
<p class="d"><b>北美洲指數</b><i>2445.9</i><i>▼-0.77%</i><em>06/27</em></p>
<p class="d"><b>美國指數</b><i>2304.9</i><i>▼-0.83%</i><em>06/27</em></p>
<p class="d"><b>巴西指數</b><i>1668.1</i><i>▼-0.86%</i><em>06/27</em></p>
<p class="u"><b>歐非中東指數</b><i>254.9</i><i>▲0.11%</i><em>06/27</em></p>
<p class="d"><b>墨西哥指數</b><i>5736.4</i><i>▼-0.55%</i><em>06/27</em></p>
<p class="d"><b>中國指數</b><i>73.09</i><i>▼-0.37%</i><em>06/27</em></p>
<p class="d"><b>台灣指數</b><i>372.7</i><i>▼-0.38%</i><em>06/27</em></p>
</div>
<div class="t" style="left:598px;top:2592px;--p:97px;--c:150px;--q:209px;--rh:34.45px">
<div class="hd">農產品即時報價</div>
<div class="h"><b>名稱</b><i>價格</i><i>漲跌</i><i>比例</i><em>時間</em></div>
<p class="u"><b>橡膠</b><i>199.5</i><i>▲5.9</i><i>▲3.05%</i><em>14:00</em></p>
<p class="d"><b>稻米</b><i>11.26</i><i>▼0.03</i><i>▼0.27%</i><em>22:54</em></p>
<p class="u"><b>玉米</b><i>359.5</i><i>▲0.25</i><i>▲0.07%</i><em>23:56</em></p>
<p class="u"><b>小麥</b><i>454.8</i><i>▲1.5</i><i>▲0.33%</i><em>23:50</em></p>
<p class="d"><b>可可</b><i>1769.0</i><i>▼44.0</i><i>▼2.43%</i><em>12:21</em></p>
<p class="u"><b>棉花</b><i>74.37</i><i>▲0.7</i><i>▲0.94%</i><em>12:43</em></p>
<p class="u"><b>咖啡</b><i>123.3</i><i>▲1.4</i><i>▲1.11%</i><em>12:50</em></p>
<p class="u"><b>黃豆</b><i>912.8</i><i>▲1.5</i><i>▲0.16%</i><em>00:00</em></p>
<p class="u"><b>黃豆粉</b><i>294.9</i><i>▲0.9</i><i>▲0.31%</i><em>23:51</em></p>
<p class="d"><b>黃豆油</b><i>32.05</i><i>▼0.03</i><i>▼0.09%</i><em>23:51</em></p>
<p class="u" style="border-bottom-color:transparent"><b>11號糖</b><i>12.70</i><i>▲0.09</i><i>▲0.71%</i><em>13:00</em></p>
</div>
<div class="t" style="left:598px;top:3032px;--p:82px;--c:139px;--q:200px;--rh:34.4px">
<div class="hd">貴金屬即時報價</div>
<div class="h"><b style="width:60px">名稱</b><i>價格</i><i>漲跌</i><i>比例</i><em>時間</em></div>
<p class="u"><b>白金</b><i>921.3</i><i>▲2.7</i><i>▲0.30%</i><em>06/28</em></p>
<p class="u"><b>銀</b><i>16.79</i><i>▲0.13</i><i>▲0.77%</i><em>06/28</em></p>
<p class="n"><b>銅</b><i>2.64</i><i>0</i><i>0.00%</i><em>06/28</em></p>
<p class="n"><b>鋁</b><i>0.8515</i><i>0</i><i>0.00%</i><em>06/28</em></p>
<p class="n"><b>鉛</b><i>1.03</i><i>0</i><i>0.00%</i><em>06/28</em></p>
<p class="d"><b>鎳</b><i>4.17</i><i>▼0.02</i><i>▼0.48%</i><em>06/28</em></p>
<p class="u"><b>鈀</b><i>864.1</i><i>▲3.1</i><i>▲0.36%</i><em>06/28</em></p>
<p class="u"><b>黃金</b><i>1251.7</i><i>▲4.5</i><i>▲0.36%</i><em>06/28</em></p>
<p class="n" style="border-bottom-color:transparent"><b>鋅</b><i>1.24</i><i>0</i><i>0.00%</i><em>06/28</em></p>
</div>

<div class="pt" style="left:5px;top:3543px">
<div class="hd">當日</div>
<div class="h"><b style="width:80px">名稱</b><em style="right:6px">比例</em></div>
<p><b>澳洲雪梨</b><i>▲0.70%</i></p>
<p><b>越南指數</b><i>▲0.07%</i></p>
<p><b>上海綜合</b><i>▲0.03%</i></p>
<p class="d tw"><b>MIN道瓊期</b><i>▼0.05%</i></p>
<p class="d"><b>泰國</b><i>▼0.08%</i></p>
<p class="d"><b>美元指數</b><i>▼0.09%</i></p>
<p class="d"><b>印度指數</b><i>▼0.09%</i></p>
<p class="d" style="border-bottom-color:transparent"><b>新加坡</b><i>▼0.14%</i></p>
</div>
<div class="pt" style="left:141px;top:3543px">
<div class="hd">一周</div>
<div class="h"><b style="width:80px">名稱</b><em style="right:6px">比例</em></div>
<p><b>上海綜合</b><i>▲1.68%</i></p>
<p><b>南韓綜合</b><i>▲0.69%</i></p>
<p><b>加權指數</b><i>▲0.68%</i></p>
<p><b>深圳綜合</b><i>▲0.60%</i></p>
<p><b>瑞士市指</b><i>▲0.55%</i></p>
<p><b>泰國</b><i>▲0.47%</i></p>
<p><b>紅籌指數</b><i>▲0.03%</i></p>
<p style="border-bottom-color:transparent"><b>越南指數</b><i>▲0.01%</i></p>
</div>
<div class="pt" style="left:277px;top:3543px">
<div class="hd">一個月</div>
<div class="h"><b style="width:80px">名稱</b><em style="right:6px">比例</em></div>
<p><b>深圳綜合</b><i>▲4.54%</i></p>
<p><b>加權指數</b><i>▲3.53%</i></p>
<p><b>越南指數</b><i>▲2.92%</i></p>
<p><b>日本日經</b><i>▲2.45%</i></p>
<p><b>上海綜合</b><i>▲2.43%</i></p>
<p><b>南韓綜合</b><i>▲1.38%</i></p>
<p><b>道瓊綜合</b><i>▲1.36%</i></p>
<p style="border-bottom-color:transparent"><b>道瓊指數</b><i>▲1.34%</i></p>
</div>
<div class="pt" style="left:413px;top:3543px">
<div class="hd">三個月</div>
<div class="h"><b style="width:80px">名稱</b><em style="right:6px">比例</em></div>
<p><b>南韓綜合</b><i>▲10.66%</i></p>
<p><b>恆生指數</b><i>▲6.42%</i></p>
<p><b>日本日經</b><i>▲6.21%</i></p>
<p><b>越南指數</b><i>▲6.15%</i></p>
<p><b>印度指數</b><i>▲5.75%</i></p>
<p><b>德國指數</b><i>▲5.63%</i></p>
<p><b>瑞士市指</b><i>▲5.57%</i></p>
<p style="border-bottom-color:transparent"><b>加權指數</b><i>▲5.25%</i></p>
</div>
<div class="pt" style="left:549px;top:3543px">
<div class="hd">今年以來</div>
<div class="h"><b style="width:80px">名稱</b><em style="right:6px">比例</em></div>
<p><b>南韓綜合</b><i>▲17.73%</i></p>
<p><b>印度指數</b><i>▲16.25%</i></p>
<p><b>恆生指數</b><i>▲16.24%</i></p>
<p class="tw"><b>費城半導體</b><i>▲15.58%</i></p>
<p><b>越南指數</b><i>▲15.52%</i></p>
<p><b>NASDAQ</b><i>▲13.22%</i></p>
<p><b>加權指數</b><i>▲12.10%</i></p>
<p style="border-bottom-color:transparent"><b>新加坡</b><i>▲11.60%</i></p>
</div>
<div class="a" style="left:685px;top:3543px;width:193px">
<div style="height:64px;border-bottom:2px solid #e8a865;font-size:24px;line-height:36px;color:#777;padding-left:8px;position:relative">全球股市休市<br>日<span class="a" style="right:0;top:6px;font-size:11px;color:#e5141d;font-weight:bold">看更多❯</span></div>
<div style="height:22px;border-bottom:2px solid #eee;color:#777;line-height:20px;position:relative"><span class="a" style="left:10px">日期</span><span class="a" style="left:98px">休市國家</span></div>
<div style="line-height:30px;font-size:14px;color:#222">
<div style="height:32px;border-bottom:2px solid #eee">06-28(三)&nbsp; 印尼</div>
<div style="height:32px;border-bottom:2px solid #eee">06-29(四)&nbsp; 印尼、委內瑞拉</div>
<div style="height:32px;border-bottom:2px solid #eee">06-30(五)&nbsp; 印尼</div>
<div style="height:32px;border-bottom:2px solid #eee">07-03(一)&nbsp; 加拿大</div>
<div style="height:32px;border-bottom:2px solid #eee">07-04(二)&nbsp; 美國</div>
<div style="height:32px">07-05(三)&nbsp; 捷克、委內瑞拉</div>
</div>
</div>

<div id="foot" class="a">
<div class="fc" style="left:3px"><h4>服務總覽</h4>即時國際指數<br>智慧選股<br>嗨聖杯<br>台股大盤<br>部落格<br>個股分析<br>理財學院<br>哈拉版<br>嗨問答<br>線上教學課程<br>購物儲值<br>序號儲值<br>切換電腦版</div>
<div class="fc" style="left:139px"><h4>國際個股分類總覽</h4>國際個股總覽<br>台股股價<br>美股股價<br>陸股股價<br>港股股價<br>日股股價<br>韓股股價</div>
<div class="fc" style="left:275px"><h4>即時國際指數</h4>國際股市指數<br>台股總覽<br>台股分類走勢圖<br>MSCI指數<br>重點股市即時走勢圖<br>全球股市休市日<h4 class="s">台股資訊</h4>台股大盤<br>台股排行<br>現股當沖<br>三大法人<br>融資融券<br>騰落線<br>臺指選擇權<br>抽籤申購<br>除權除息表</div>
<div class="fc" style="left:411px"><h4>智慧選股系統</h4>智慧選股工具<br>即時優質選股<br>進出場通知<br>績效回溯分析<h4 class="s">個股分析</h4>台積電<br>大立光<br>鴻海<br>台灣50</div>
<div class="fc" style="left:547px"><h4>理財達人部落格</h4>何毅里長伯<br>紫殺<br>阿布波<br>Leo柏凡<br>呂佳霖<br>Simon<br>期貨太極流一條諒諒<br>名諭爸 <span style="color:#f3c21a">NEW</span><br>小夫<br>奧丁團隊<br>嗨投資專欄<br>嗨新奇</div>
<div class="fc" style="left:683px"><h4>理財學院</h4>何毅的實戰控盤轉折術<br>紫殺的天譴部隊<br>俠客盟-多空戰技研究院<br>操盤手百萬小學堂<br>箱波均控盤戰法<br>期貨波段海龜複利交易術<br>期貨交易太極流<br>名諭爸股票.權證.實戰夢想室<h4 class="s">網站資源</h4>FaceBook官方粉絲團<br>Google+官方粉絲團<br>YouTube頻道<br>使用說明<br>建議與問題回報</div>
</div>
<div id="bb" class="a"><span class="a" style="left:11px">經營團隊：HiStock, Inc.</span><span class="a" style="left:172px">服務條款與隱私權政策</span><span class="a" style="right:2px">© 2013 HiStock, Inc. 嗨投資理財分享社群</span></div>
</body></html>
